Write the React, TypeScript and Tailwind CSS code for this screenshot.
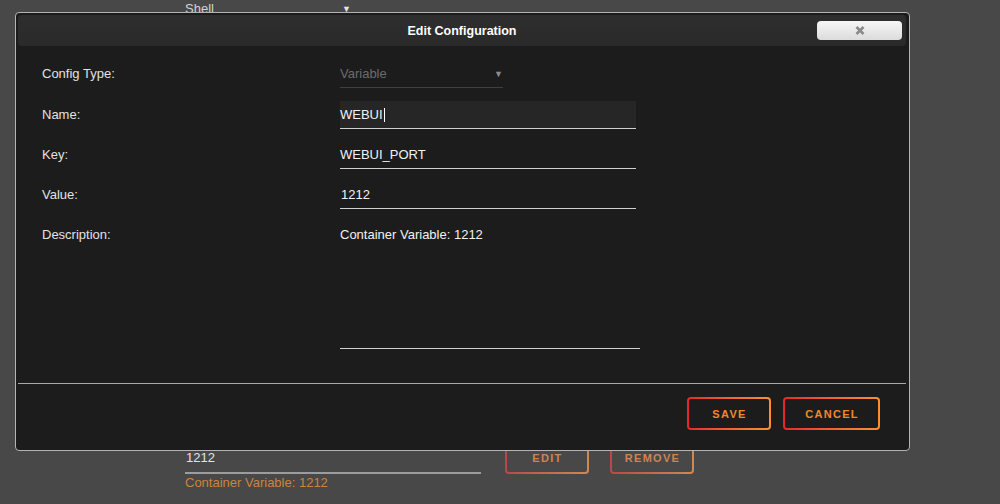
import React from "react";

function GradButton({ label, w, dim }: { label: string; w: string; dim?: boolean }) {
  return (
    <div
      className={
        dim
          ? `h-[33px] ${w} rounded-[4px] bg-linear-to-r from-[#b84848] to-[#cf8a4e] p-[2px]`
          : `h-[33px] ${w} rounded-[4px] bg-linear-to-r from-[#e4262a] to-[#ff8e30] p-[2px]`
      }
    >
      <div
        className={
          dim
            ? "flex h-full items-center justify-center rounded-[2px] bg-[#484848] pl-[1px] text-[11px] font-bold tracking-[1.3px] text-[#cd8454]"
            : "flex h-full items-center justify-center rounded-[2px] bg-[#1c1c1c] pl-[1px] text-[11px] font-bold tracking-[1.3px] text-[#f3872d]"
        }
      >
        {label}
      </div>
    </div>
  );
}

function Row({ label, children }: { label: string; children: React.ReactNode }) {
  return (
    <div className="flex items-start">
      <div className="flex h-[28px] w-[322px] items-center pl-[24px] text-[#e2e2e2]">{label}</div>
      {children}
    </div>
  );
}

export default function App() {
  return (
    <div className="relative h-[504px] w-[1000px] overflow-hidden bg-[#484848] font-['Liberation_Sans',Arial,sans-serif] text-[13px] leading-[16px]">
      {/* page behind the dialog */}
      <div className="flex h-full flex-col justify-between">
        <div className="flex items-center pl-[185px] pt-[1px] text-[#d2d2d2]">
          <span className="w-[157px]">Shell</span>
          <span className="text-[9px] text-[#e4e4e4]">▼</span>
        </div>
        <div className="flex items-start pb-[13px] pl-[185px]">
          <div className="mt-[2px] w-[296px]">
            <div className="flex h-[31px] items-center border-b-2 border-[#9c9c9c] pl-[1px] text-[#e2e2e2]">1212</div>
            <div className="pt-[1px] text-[#cc843c]">Container Variable: 1212</div>
          </div>
          <div className="ml-[24px] flex gap-[21px]">
            <GradButton label="EDIT" w="w-[84px]" dim />
            <GradButton label="REMOVE" w="w-[84px]" dim />
          </div>
        </div>
      </div>

      {/* dialog */}
      <div className="absolute left-[15px] top-[12px] flex h-[439px] w-[895px] flex-col rounded-[4px] border border-[#b4b4b4] bg-[#1c1c1c] p-[2px] pr-[3px]">
        <div className="relative flex h-[31px] shrink-0 items-center justify-center rounded-[4px] bg-linear-to-b from-[#2e2e2e] to-[#2a2a2a]">
          <span className="text-[12.5px] font-bold text-white">Edit Configuration</span>
          <div className="absolute right-[4px] top-[6px] flex h-[19px] w-[85px] items-center justify-center rounded-[4px] bg-linear-to-b from-[#f6f6f6] to-[#dcdcdc]">
            <svg width="10" height="9" viewBox="0 0 10 9">
              <path d="M1.5 1 L8.5 8 M8.5 1 L1.5 8" stroke="#8a8a8a" strokeWidth="2.6" />
            </svg>
          </div>
        </div>

        <div className="flex flex-col gap-[12px] pt-[14px]">
          <div className="mb-[1px]">
            <Row label="Config Type:">
              <div className="flex h-[28px] w-[163px] items-center justify-between border-b border-[#404040] text-[#6c6c6c]">
                <span>Variable</span>
                <span className="text-[9px] text-[#8c8c8c]">▼</span>
              </div>
            </Row>
          </div>
          <Row label="Name:">
            <div className="flex h-[28px] w-[296px] items-center border-b border-[#d0d0d0] bg-[#262626] text-[#f2f2f2]">
              <span>WEBUI</span>
              <span className="ml-[1px] h-[14px] w-[1px] bg-white" />
            </div>
          </Row>
          <Row label="Key:">
            <div className="flex h-[28px] w-[296px] items-center border-b border-[#d0d0d0] text-[#f2f2f2]">WEBUI_PORT</div>
          </Row>
          <Row label="Value:">
            <div className="flex h-[28px] w-[296px] items-center border-b border-[#d0d0d0] pl-[1px] text-[#f2f2f2]">1212</div>
          </Row>
          <Row label="Description:">
            <div className="h-[128px] w-[300px] border-b border-[#d0d0d0] pt-[6px] text-[#f2f2f2]">Container Variable: 1212</div>
          </Row>
        </div>

        <div className="mt-[34px] h-[1px] shrink-0 bg-[#a8a8a8]" />

        <div className="mt-[13px] flex justify-end gap-[12px] pr-[26px]">
          <GradButton label="SAVE" w="w-[84px]" />
          <GradButton label="CANCEL" w="w-[97px]" />
        </div>
      </div>
    </div>
  );
}
